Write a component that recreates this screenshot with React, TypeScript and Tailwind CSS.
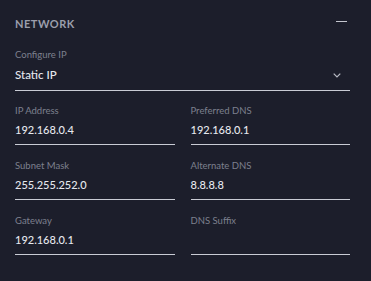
import React from "react";

function Field({ label, value }: { label: string; value: string }) {
  return (
    <div>
      <div className="text-[9.5px] leading-[12px] text-[#7d808e]">{label}</div>
      <div className="mt-[6px] h-[14px] text-[11px] leading-[14px] text-[#e6e8ee] font-medium">{value}</div>
      <div className="mt-[7px] h-px bg-[#c9cbd4]" />
    </div>
  );
}

export default function App() {
  return (
    <div
      className="w-[371px] h-[281px] bg-[#1c1e2b] pl-[15px] pr-[21px] pt-[17px]"
      style={{ fontFamily: "Lato, 'Noto Sans', sans-serif" }}
    >
      <div className="flex items-start justify-between h-[14px]">
        <div className="text-[11px] leading-[14px] font-bold tracking-[0.5px] text-[#9b9eac]">NETWORK</div>
        <div className="w-[11px] h-px bg-[#c4c6cf] mr-[3px] mt-[4px]" />
      </div>

      <div className="mt-[18px]">
        <div className="text-[9.5px] leading-[12px] text-[#7d808e]">Configure IP</div>
        <div className="mt-[7px] flex items-center justify-between h-[14px]">
          <span className="text-[11.5px] leading-[14px] text-[#e6e8ee] font-medium">Static IP</span>
          <svg width="8" height="5" viewBox="0 0 8 5" className="mr-[9px]" fill="none">
            <path d="M0.7 0.7L4 4L7.3 0.7" stroke="#b8bac4" strokeWidth="1.2" />
          </svg>
        </div>
        <div className="mt-[8px] h-px bg-[#c9cbd4]" />
      </div>

      <div className="mt-[14px] grid grid-cols-2 gap-x-[16px] gap-y-[15px]">
        <Field label="IP Address" value="192.168.0.4" />
        <Field label="Preferred DNS" value="192.168.0.1" />
        <Field label="Subnet Mask" value="255.255.252.0" />
        <Field label="Alternate DNS" value="8.8.8.8" />
        <Field label="Gateway" value="192.168.0.1" />
        <Field label="DNS Suffix" value="" />
      </div>
    </div>
  );
}
